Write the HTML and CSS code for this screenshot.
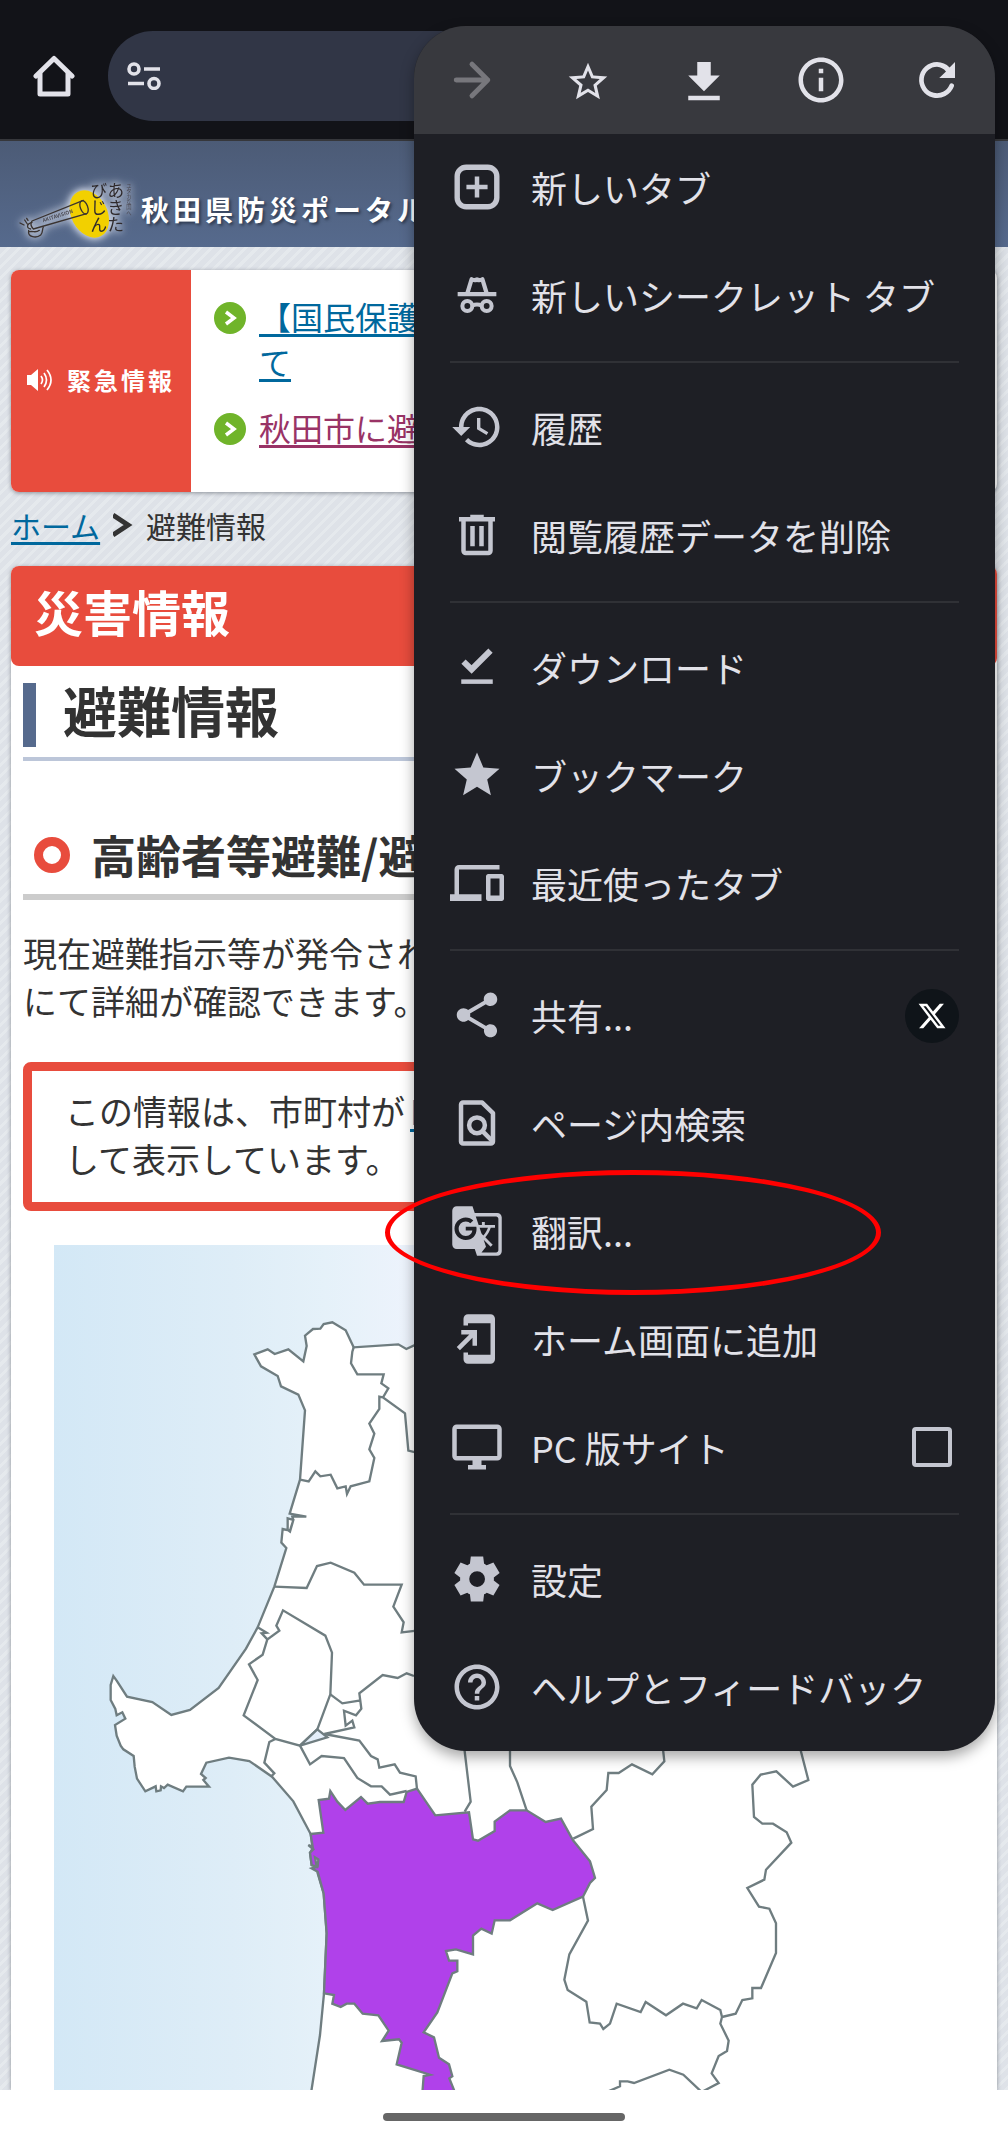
FILE: index.html
```html
<!DOCTYPE html>
<html lang="ja">
<head>
<meta charset="utf-8">
<meta name="viewport" content="width=device-width, initial-scale=1">
<title>避難情報 | 秋田県防災ポータル</title>
<link rel="stylesheet" href="styles.css">
</head>
<body>
<div class="toolbar">
  <button class="icon-btn" type="button" aria-label="ホーム">
    <svg class="home-icon" viewBox="0 0 42 42" fill="none" stroke="#e2e2e9" stroke-width="5" stroke-linejoin="round" stroke-linecap="round"><path d="M3 21 21 3.500l18 17.500"/><path d="M7 19v20h28V19"/></svg>
  </button>
  <div class="omnibox">
    <svg class="tune-icon" viewBox="0 0 34 28" fill="none" stroke="#e2e2e9" stroke-width="3.600"><circle cx="7" cy="7" r="5"/><path d="M17 7h16M1 21.500h16"/><circle cx="27" cy="21.500" r="5"/></svg>
    <input class="omnibox-input" type="text" aria-label="アドレス">
  </div>
</div>

<header class="site-header">
  <svg class="site-logo" viewBox="15 30 360 216" role="img" aria-label="あきたびじょん">
    <ellipse cx="238" cy="147" rx="54" ry="75" fill="#f2d000" transform="rotate(-28 238 147)"/>
    <g fill="none" stroke="#3a3330" stroke-width="4" stroke-linejoin="round" stroke-linecap="round">
      <path d="M220 106 66 168q-8 12 4 24l160-46"/>
      <ellipse cx="222" cy="127" rx="11" ry="21" transform="rotate(-20 222 127)"/>
      <path d="M66 172c-16 4-18 18-4 20M56 196c-4 22 24 24 36 14 8-8 4-18 8-24M58 200c14-2 20 4 30-4M44 165l8 12M30 174l12 6M50 160l4 6"/>
    </g>
    <g class="logo-text" fill="#2f2a2c">
      <text x="317" y="52">あきた</text>
      <text x="266" y="52">びじん</text>
    </g>
    <text class="logo-small" x="357" y="55" fill="#4a4850">ユタカな国へ</text>
    <text class="logo-en" x="100" y="172" fill="#4a4850" transform="rotate(-18 100 172)">AKITAVISION</text>
  </svg>
  <span class="site-title">秋田県防災ポータル</span>
</header>

<div class="page">
  <section class="alert">
    <h2 class="alert-label">
      <svg class="speaker" viewBox="0 0 26 22" fill="none" stroke="#fff" stroke-width="1.700"><path d="M0 6h4l7-6v22l-7-6H0z" fill="#fff" stroke="none"/><path d="M14 7q3 4 0 8M17 4q5 7 0 14M20 1q8 10 0 20"/></svg>
      緊急情報
    </h2>
    <ul class="alert-list">
      <li><svg class="bullet" viewBox="0 0 32 32"><circle cx="16" cy="16" r="16" fill="#70b42a"/><path d="m12 10 8 6-8 6" fill="none" stroke="#fff" stroke-width="3.500"/></svg><a href="#">【国民保護<br>て</a></li>
      <li><svg class="bullet" viewBox="0 0 32 32"><circle cx="16" cy="16" r="16" fill="#70b42a"/><path d="m12 10 8 6-8 6" fill="none" stroke="#fff" stroke-width="3.500"/></svg><a class="visited" href="#">秋田市に避</a></li>
    </ul>
  </section>

  <nav class="crumbs" aria-label="パンくず">
    <a href="#">ホーム</a>
    <svg class="crumb-sep" viewBox="0 0 20 26" fill="none" stroke="#333" stroke-width="5"><path d="m0 3 15 10L0 23"/></svg>
    <span>避難情報</span>
  </nav>

  <main class="card">
    <h1 class="card-head">災害情報</h1>
    <div class="card-body">
      <h2 class="title">避難情報</h2>
      <h3 class="subtitle">高齢者等避難/避</h3>
      <p class="lead">現在避難指示等が発令され<br>にて詳細が確認できます。</p>
      <div class="notice">この情報は、市町村が<a href="#">Lアラート</a><br>して表示しています。</div>
      <svg class="map" viewBox="162 75 2700 2535" role="img" aria-label="秋田県の地図">
        <defs><linearGradient id="sea" x1="0" x2="1"><stop offset="0" stop-color="#d3e8f6"/><stop offset=".2" stop-color="#deedf7"/><stop offset=".3" stop-color="#e5f1f9"/><stop offset=".4" stop-color="#edf3fc"/><stop offset=".65" stop-color="#fff"/></linearGradient></defs>
        <rect x="162" y="75" width="2700" height="2535" fill="url(#sea)"/>
        <g stroke="#6f7d80" stroke-width="7" fill="none">
          <path fill="#fff" d="M2900 360 1242 376 1219 387 1195 373 1061 382 1037 331 997 307 971 312 961 326 939 327 915 347 920 378 910 424 865 388 824 402 803 388 763 403 783 439 833 468 843 499 895 524 915 571 900 779 869 881 919 890 877 890 880 900 870 935 863 930 863 895 880 900 870 932 848 927 844 968 859 984 823 1100 773 1222 738 1286 656 1404 570 1470 514 1485 457 1446 381 1430 350 1382 340 1368 332 1395 332 1440 346 1467 350 1486 367 1477 376 1496 345 1515 350 1547 362 1577 370 1588 401 1608 404 1640 411 1676 436 1714 467 1699 469 1714 482 1711 483 1699 492 1704 503 1694 549 1714 559 1700 627 1700 610 1680 617 1674 603 1662 619 1628 687 1613 748 1623 816 1670 880 1744 932 1842 938 1885 930 1898 935 1935 952 1940 953 1960 971 2020 980 2140 972 2320 960 2445 933 2620 2900 2620z"/>
          <path d="m1061 382-4 13-4 35 19 33h79l-7 27 21 15-16 27 66 48 10 112 25 6M1149 532l-11-2v37l-30 44 15 30-15 47 15 26-15 70-56 15-11 23-4-23-25 6-20-41-31 5-15-15-20 30-26-5"/>
          <path d="m823 1100 97 4 31-66 41-10 71 30 29 36h113l-25 66 31 47-6 30 45-5M773 1222l27 16-15 2 17 18 36-26-9-15 20-46 127 76 20 51-5 125-39 105-52 49-74-20-95-71 42-106-26-47 41-29 14-46"/>
          <path d="m826 1557-18 9-15 62 30 32-10 10M991 1423l36 27 55-9M1242 1368l-22-8-27 14-45-9-70 55 6 46-16 20-36-14 5 45 20-15 6 20-90 20 105 20 35 46 20 10 5 25 46-10 16 25 47 11 4 38"/>
          <path fill="#e5effa" d="m952 1528 30 24-82 25z"/>
          <path d="m900 1577 30 56 35-25 67 6 40 60 41 25h32l25 25 50-11"/>
          <g transform="translate(600 1500)">
            <path fill="#b041ea" d="M332 342 370 338 356 240 387 236 391 213 412 245 436 270 483 231 503 251 540 246 611 246 620 216 651 206 706 286 807 277 819 358 834 362 884 333 884 305 930 271 980 271 1037 306 1083 296 1119 361 1170 424 1185 474 1170 489 1149 530 1058 570 1012 550 930 601 884 601 875 641 844 626 819 647 819 703 768 688 738 693 747 722 772 722 772 754 757 760 712 877 671 937 702 952 717 1013 747 1033 757 1069 748 1075 766 1120 667 1120 671 1068 690 1064 590 1033 605 968 597 958 546 963 566 932 535 886 488 881 463 851 440 851 422 861 397 851 402 825 372 820 380 640 371 520 353 455 335 445 353 440 355 418 345 412 350 440 335 435 330 398 340 388 325 375 338 380z"/>
            <path d="m790 60 22 185-18 30M930 60v78l22 49 28 84"/>
          </g>
          <g transform="translate(1680 1500)">
            <path d="M306 60 313 124 277 163 216 133 176 159 145 159 140 210 94 260 99 327 40 356M714 60 745 180 699 200 649 154 602 164 577 194 582 291 607 311 639 311 680 337 694 368 618 449 613 479 562 504 597 560 628 566 648 610 648 699 603 804 577 804 577 835 547 840 527 881 486 891 481 870 425 840 410 865 369 851 318 886 257 846 242 876 170 851 150 911 130 927 120 911 89 907 79 845 23 810 13 779 28 703 84 602 69 530M486 891 481 911 506 962 501 993 476 1008 455 1060 476 1089 425 1116M425 1116 370 1064 328 1049 222 1089 203 1084 180 1084 180 1099 145 1114"/>
          </g>
        </g>
      </svg>
    </div>
  </main>
</div>

<div class="gesture-bar"><span class="gesture-pill"></span></div>

<div class="menu">
  <div class="menu-top">
    <button class="icon-btn" type="button" aria-label="進む" disabled><svg class="ic" viewBox="0 0 24 24" fill="none" stroke="#77777c" stroke-width="2.200" stroke-linecap="round" stroke-linejoin="round"><path d="M5 12h14M12 5l7 7-7 7"/></svg></button>
    <button class="icon-btn" type="button" aria-label="ブックマークに追加"><svg class="ic" viewBox="-2 -3 28 28"><path d="m22 9.240-7.190-.620L12 2 9.190 8.630 2 9.240l5.460 4.730L5.820 21 12 17.270 18.180 21l-1.630-7.030zM12 15.400l-3.760 2.270 1-4.280-3.320-2.880 4.380-.380L12 6.100l1.710 4.040 4.380.380-3.320 2.880 1 4.280z"/></svg></button>
    <button class="icon-btn" type="button" aria-label="ダウンロード"><svg class="ic" viewBox="0 -1 24 24"><path d="M19 9h-4V3H9v6H5l7 7zM5 18v2h14v-2z"/></svg></button>
    <button class="icon-btn" type="button" aria-label="ページ情報"><svg class="ic" viewBox="0 0 24 24"><path d="M11 7h2v2h-2zm0 4h2v6h-2zm1-9C6.480 2 2 6.480 2 12s4.480 10 10 10 10-4.480 10-10S17.520 2 12 2m0 18c-4.410 0-8-3.590-8-8s3.590-8 8-8 8 3.590 8 8-3.590 8-8 8"/></svg></button>
    <button class="icon-btn" type="button" aria-label="再読み込み"><svg class="ic" viewBox="0 0 24 24"><path d="M20 4v7.100h-7l3-2.900A5.900 5.900 0 0 0 12 6.100a5.900 5.900 0 1 0 5.500 8.100 1 1 0 0 1 2 .7A8 8 0 1 1 12 4a8 8 0 0 1 5.600 2.400z"/></svg></button>
  </div>
  <ul class="menu-list">
    <li><button class="item" type="button"><svg class="ic" viewBox="0 0 24 24" fill="none" stroke="#c4c6d0"><rect x="3.200" y="3.200" width="17.600" height="17.600" rx="4" stroke-width="2.400"/><path d="M7.300 12h9.400M12 7.300v9.400" stroke-width="2"/></svg>新しいタブ</button></li>
    <li><button class="item" type="button"><svg class="ic" viewBox="0 0 24 24" fill="none" stroke="#c4c6d0"><path d="M3.400 11.600h17.200" stroke-width="1.900"/><path d="M7.700 11.300 9.600 5q1.200.700 2.400.100 1.200.600 2.400-.100l1.900 6.300" stroke-width="1.900" stroke-linejoin="round"/><circle cx="7.700" cy="16.900" r="2.200" stroke-width="1.800"/><circle cx="16.300" cy="16.900" r="2.200" stroke-width="1.800"/><path d="M9.800 16.700q2.200-1 4.400 0" stroke-width="1.800"/></svg>新しいシークレット タブ</button></li>
    <li class="rule" role="separator"></li>
    <li><button class="item" type="button"><svg class="ic" viewBox="0 0 24 24"><path d="M13 3c-4.970 0-9 4.030-9 9H1l3.890 3.890.07.14L9 12H6c0-3.870 3.130-7 7-7s7 3.130 7 7-3.130 7-7 7c-1.930 0-3.680-.790-4.940-2.060l-1.420 1.420C8.270 19.990 10.510 21 13 21c4.970 0 9-4.030 9-9s-4.030-9-9-9m-1 5v5l4.280 2.540.72-1.210-3.500-2.080V8z"/></svg>履歴</button></li>
    <li><button class="item" type="button"><svg class="ic" viewBox="0 0 24 24"><path d="M7 21q-.825 0-1.412-.587T5 19V6H4V4h5V3h6v1h5v2h-1v13q0 .825-.587 1.413T17 21zM17 6H7v13h10zM9 17h2V8H9zm4 0h2V8h-2z"/></svg>閲覧履歴データを削除</button></li>
    <li class="rule" role="separator"></li>
    <li><button class="item" type="button"><svg class="ic" viewBox="0 0 24 24"><path d="m6 9.600 3.600 3.500L18 4.700" fill="none" stroke="#c4c6d0" stroke-width="2.700"/><path d="M5 17.500h14v2H5z"/></svg>ダウンロード</button></li>
    <li><button class="item" type="button"><svg class="ic" viewBox="0 0 24 24"><path d="M12 17.270 18.180 21l-1.640-7.030L22 9.240l-7.190-.610L12 2 9.190 8.630 2 9.240l5.460 4.730L5.820 21z"/></svg>ブックマーク</button></li>
    <li><button class="item" type="button"><svg class="ic" viewBox="0 0 24 24"><path d="M4 6h18V4H4c-1.100 0-2 .9-2 2v11H0v3h14v-3H4zm19 2h-6c-.550 0-1 .450-1 1v10c0 .550.450 1 1 1h6c.550 0 1-.450 1-1V9c0-.550-.450-1-1-1m-1 9.500h-4V10h4z"/></svg>最近使ったタブ</button></li>
    <li class="rule" role="separator"></li>
    <li class="split"><button class="item" type="button"><svg class="ic" viewBox="0 0 24 24"><path d="M18 16.080c-.760 0-1.440.300-1.960.770L8.910 12.700c.050-.230.090-.460.090-.700s-.040-.470-.090-.700l7.050-4.110c.540.500 1.250.810 2.040.810 1.660 0 3-1.340 3-3s-1.340-3-3-3-3 1.340-3 3c0 .240.040.470.090.700L8.040 9.810C7.500 9.310 6.790 9 6 9c-1.660 0-3 1.340-3 3s1.340 3 3 3c.790 0 1.500-.310 2.040-.810l7.120 4.160c-.050.210-.080.430-.080.650 0 1.610 1.310 2.920 2.920 2.920s2.920-1.310 2.920-2.920-1.310-2.920-2.920-2.920"/></svg>共有...</button><button class="x-btn" type="button" aria-label="X で共有"><svg class="x-icon" viewBox="0 0 24 24"><path fill="#fff" d="M18.244 2.250h3.308l-7.227 8.260 8.502 11.240H16.170l-5.214-6.817L4.990 21.750H1.680l7.730-8.835L1.254 2.250H8.080l4.713 6.231zm-1.161 17.520h1.833L7.084 4.126H5.117z"/></svg></button></li>
    <li><button class="item" type="button"><svg class="ic" viewBox="0 0 24 24" fill="none" stroke="#c4c6d0" stroke-width="2"><path d="M14.300 2.900H5.800a.9.9 0 0 0-.9.9v16.400c0 .5.400.9.900.9h12.400c.5 0 .9-.4.900-.9V7.600z" stroke-linejoin="round"/><circle cx="12" cy="13" r="3.500"/><path d="m14.300 15.500 4.500 4.500"/></svg>ページ内検索</button></li>
    <li class="marked"><button class="item" type="button"><svg class="ic" viewBox="0 0 24 24"><path d="M21 4H11l-1-3H3c-1.100 0-2 .9-2 2v15c0 1.100.9 2 2 2h8l1 3h9c1.100 0 2-.9 2-2V6c0-1.100-.9-2-2-2M7 16c-2.760 0-5-2.240-5-5s2.240-5 5-5c1.350 0 2.480.5 3.350 1.300L9.030 8.570c-.380-.360-1.040-.780-2.030-.780-1.740 0-3.150 1.440-3.150 3.210S5.260 14.210 7 14.210c2.010 0 2.840-1.440 2.920-2.410H7v-1.710h4.680c.070.310.120.610.120 1.020C11.800 13.970 9.890 16 7 16m6.170-5.420h3.700c-.430 1.250-1.110 2.430-2.050 3.470-.310-.350-.600-.720-.860-1.100zm8.330 9.920c0 .550-.450 1-1 1H14l2-2.500-1.040-3.100 3.100 3.100.920-.920-3.300-3.250.02-.02c1.130-1.250 1.930-2.690 2.400-4.220H20v-1.300h-4.530V8h-1.290v1.290h-1.440L11.460 5.500h9.040c.550 0 1 .450 1 1z"/></svg>翻訳...</button><span class="ring"></span></li>
    <li><button class="item" type="button"><svg class="ic" viewBox="0 0 24 24"><path d="M18 1H8c-1.100 0-2 .9-2 2v3h2V5h10v14H8v-1H6v3c0 1.100.9 2 2 2h10c1.100 0 2-.9 2-2V3c0-1.100-.9-2-2-2m-8 14h2V8H5v2h3.590L3 15.590 4.410 17 10 11.410z"/></svg>ホーム画面に追加</button></li>
    <li><label class="item"><svg class="ic" viewBox="0 0 24 24"><path d="M21 2H3c-1.100 0-2 .9-2 2v12c0 1.100.9 2 2 2h7v2H8v2h8v-2h-2v-2h7c1.100 0 2-.9 2-2V4c0-1.100-.9-2-2-2m0 14H3V4h18z"/></svg>PC 版サイト<input class="check" type="checkbox"></label></li>
    <li class="rule" role="separator"></li>
    <li><button class="item" type="button"><svg class="ic" viewBox="0 0 24 24"><path d="m9.250 22-.4-3.200q-.325-.125-.612-.3t-.563-.375L4.700 19.375l-2.750-4.750 2.575-1.950Q4.500 12.500 4.500 12.337v-.675q0-.162.025-.337L1.950 9.375l2.750-4.750 2.975 1.250q.275-.2.575-.375t.6-.3l.4-3.200h5.500l.4 3.200q.325.125.613.3t.562.375l2.975-1.250 2.750 4.750-2.575 1.950q.025.175.025.338v.674q0 .163-.05.338l2.575 1.950-2.750 4.750-2.950-1.250q-.275.2-.575.375t-.6.3l-.4 3.200zm2.800-6.500q1.450 0 2.475-1.025T15.550 12t-1.025-2.475T12.050 8.500q-1.475 0-2.488 1.025T8.550 12t1.013 2.475T12.050 15.500"/></svg>設定</button></li>
    <li><button class="item" type="button"><svg class="ic" viewBox="0 0 24 24"><path d="M11 18h2v-2h-2zm1-16C6.480 2 2 6.480 2 12s4.480 10 10 10 10-4.480 10-10S17.520 2 12 2m0 18c-4.410 0-8-3.590-8-8s3.590-8 8-8 8 3.590 8 8-3.590 8-8 8m0-14c-2.210 0-4 1.790-4 4h2c0-1.100.9-2 2-2s2 .9 2 2c0 2-3 1.750-3 5h2c0-2.250 3-2.500 3-5 0-2.210-1.790-4-4-4"/></svg>ヘルプとフィードバック</button></li>
  </ul>
</div>
</body>
</html>
```
FILE: styles.css
```css
*, *::before { box-sizing: border-box; }

body {
  margin: 0;
  position: relative;
  min-height: 100vh;
  display: flex;
  flex-direction: column;
  background: #fff;
  color: #333;
  font-family: "Noto Sans CJK JP", "Noto Sans", sans-serif;
}

h1, h2, h3, p, ul { margin: 0; padding: 0; }
ul { list-style: none; }
svg { display: block; flex: none; }
a { color: #00689d; text-underline-offset: 4px; text-decoration-thickness: 3px; text-decoration-skip-ink: none; }
a.visited { color: #993366; }

button {
  border: 0;
  padding: 0;
  background: none;
  font: inherit;
  color: inherit;
}

/* Browser toolbar */
.toolbar {
  display: flex;
  align-items: center;
  gap: 33px;
  padding: 31px 33px 18px;
  background: #121318;
  border-bottom: 2px solid #36373b;
}
.home-icon { width: 42px; height: 42px; }
.omnibox {
  flex: 1;
  display: flex;
  align-items: center;
  height: 90px;
  padding: 0 19px;
  border-radius: 45px;
  background: #313646;
}
.tune-icon { width: 34px; height: 28px; }
.omnibox-input {
  flex: 1;
  min-width: 0;
  margin-left: 16px;
  border: 0;
  background: none;
  color: #e2e2e9;
  font: inherit;
  font-size: 34px;
}

/* Site header */
.site-header {
  display: flex;
  align-items: center;
  gap: 6px;
  padding: 34px 15px 0;
  background: linear-gradient(#4c5b76, #566a8d);
}
.site-logo {
  width: 120px;
  height: 72px;
  filter: drop-shadow(0 0 3px #c8d0e0) drop-shadow(0 0 4px #c8d0e0);
}
.logo-text { font-size: 51px; font-weight: 400; writing-mode: vertical-rl; }
.logo-small { font-size: 16px; writing-mode: vertical-rl; }
.logo-en { font-size: 15px; font-weight: 700; }
.site-title {
  padding-bottom: 5px;
  font-size: 28px;
  line-height: 40px;
  font-weight: 700;
  letter-spacing: 4px;
  color: #fff;
  white-space: nowrap;
  text-shadow: 2px 2px 3px #2e3a50;
}

/* Page */
.page {
  flex: 1;
  padding: 23px 11px 0;
  background: repeating-linear-gradient(135deg, #dee2e8 0 5px, #e5e9ed 5px 8px);
}
.alert {
  display: flex;
  border-radius: 8px;
  overflow: hidden;
  background: #fff;
  box-shadow: 0 1px 4px #8a8f98;
}
.alert-label {
  flex: none;
  display: flex;
  align-items: center;
  justify-content: center;
  gap: 14px;
  width: 180px;
  padding-bottom: 3px;
  background: #e84c3d;
  color: #fff;
  font-size: 24px;
  font-weight: 700;
  letter-spacing: 3px;
}
.speaker { width: 26px; height: 22px; }
.alert-list { padding: 24px 23px 21px; }
.alert-list li {
  display: flex;
  gap: 13px;
  margin-bottom: 21px;
  font-size: 32px;
  line-height: 45px;
}
.bullet { width: 32px; height: 32px; margin-top: 8px; }
.crumbs {
  display: flex;
  align-items: center;
  gap: 13px;
  padding: 11px 0 19px;
  font-size: 30px;
  line-height: 44px;
}
.crumb-sep { width: 20px; height: 26px; }

.card {
  background: #fff;
  border-radius: 8px 8px 0 0;
  box-shadow: 0 1px 4px #8a8f98;
}
.card-head {
  padding: 10px 23px 20px;
  border-radius: 8px;
  background: #e84c3d;
  color: #fff;
  font-size: 49px;
  line-height: 70px;
  font-weight: 700;
}
.card-body { padding: 17px 12px 0; }
.title {
  display: flex;
  align-items: flex-start;
  gap: 27px;
  padding-bottom: 10px;
  border-bottom: 4px solid #bcc6d9;
  font-size: 54px;
  line-height: 54px;
  font-weight: 700;
}
.title::before {
  content: "";
  width: 13px;
  height: 64px;
  background: #566a8d;
}
.subtitle {
  display: flex;
  align-items: center;
  gap: 21px;
  margin-top: 62px;
  padding: 0 0 7px 11px;
  border-bottom: 6px solid #ccc;
  font-size: 45px;
  line-height: 64px;
  font-weight: 700;
}
.subtitle::before {
  content: "";
  width: 36px;
  height: 36px;
  border: 9px solid #e84c3d;
  border-radius: 50%;
}
.lead {
  margin: 29px 0 37px;
  font-size: 34px;
  line-height: 48px;
}
.notice {
  padding: 16px 33px 19px;
  border: 9px solid #e84c3d;
  border-radius: 8px;
  font-size: 34px;
  line-height: 48px;
}
.notice a { margin-left: 5px; }
.map {
  width: calc(100% - 62px);
  height: auto;
  margin: 34px auto 0;
}

.gesture-bar {
  display: flex;
  justify-content: center;
  padding: 23px 0;
  background: #fff;
  z-index: 1;
}
.gesture-pill {
  width: 242px;
  height: 8px;
  border-radius: 4px;
  background: #666;
}

/* Overflow menu */
.menu {
  position: absolute;
  top: 26px;
  right: 13px;
  width: 581px;
  padding-bottom: 9px;
  border-radius: 52px;
  background: #1e1f25;
  color: #e2e2e9;
  box-shadow: 0 6px 14px rgba(0, 0, 0, .35);
  z-index: 2;
}
.menu-top {
  display: flex;
  justify-content: space-around;
  align-items: center;
  height: 108px;
  border-radius: 52px 52px 0 0;
  background: #38393e;
}
.ic { width: 54px; height: 54px; }
.menu-top .ic { fill: #e2e2e9; }
.menu-top [disabled] .ic { fill: none; }
.item {
  display: flex;
  align-items: center;
  gap: 27px;
  flex: 1;
  width: 100%;
  height: 108px;
  padding: 0 36px 2px;
  font-size: 36px;
  line-height: 54px;
  text-align: left;
  white-space: nowrap;
}
.item .ic { fill: #c4c6d0; }
.item .ic[fill="none"] { fill: none; }
.rule {
  height: 2px;
  margin: 11px 36px;
  background: #303136;
}
.split { display: flex; align-items: center; }
.x-btn {
  display: flex;
  align-items: center;
  justify-content: center;
  width: 54px;
  height: 54px;
  margin-right: 36px;
  border-radius: 50%;
  background: #0f1419;
}
.x-icon { width: 30px; height: 30px; }
.check {
  appearance: none;
  width: 40px;
  height: 40px;
  margin: 0 7px 0 auto;
  border: 4px solid #c4c6d0;
  border-radius: 4px;
}
.marked { position: relative; }
.ring {
  position: absolute;
  inset: -8px 114px -9px -29px;
  border: 5px solid #f00;
  border-radius: 50%;
  pointer-events: none;
}
```
